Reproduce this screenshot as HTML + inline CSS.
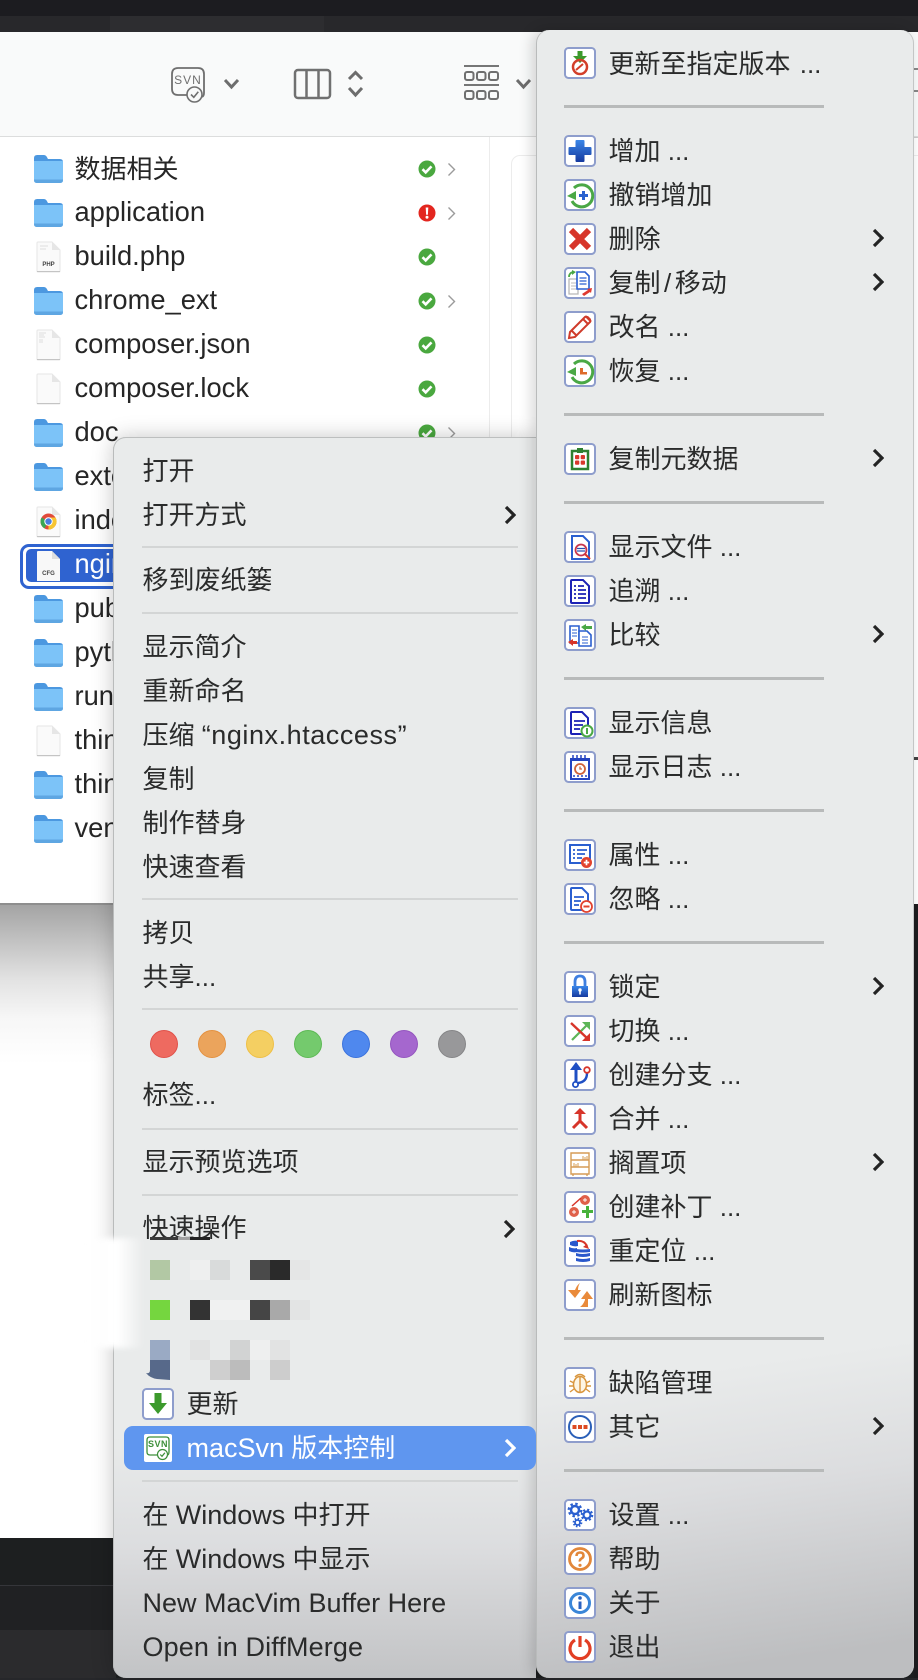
<!DOCTYPE html>
<html lang="zh"><head><meta charset="utf-8"><title>macSvn</title>
<style>
html,body{margin:0;padding:0;background:#1d1f20}
#p{position:relative;width:918px;height:1680px;overflow:hidden;font-family:"Liberation Sans","Noto Sans CJK SC",sans-serif;font-size:26px;color:#2a2b2b;background:#1d1f20}
#p div,#p svg{position:absolute}
.e{font-size:27px}
.t{line-height:44px;height:44px;white-space:nowrap}
.f{left:74.500px;color:#262626;font-size:27.300px}
.l{left:142.500px;z-index:3}
.h{left:186.500px;z-index:3}
.r{left:608.500px;z-index:6}
.i{left:564px;width:32px;height:32px;z-index:6}
.ls{left:142px;width:376px;height:2px;background:#d3d5d5;z-index:3}
.rs{left:564px;width:260px;height:3px;background:#b8baba;z-index:6}
.cr{left:872px;width:12px;height:20px;z-index:6}
.fo{left:33.500px;width:29px;height:28px}
.fi{left:36px;width:25px;height:32px}
.st{left:418px;width:18px;height:18px}
.di{left:447px;width:9px;height:15px}
.dot{width:26px;height:26px;border-radius:50%;top:1030px;z-index:3;border:1px solid}
.m{position:absolute;z-index:4;height:20px;width:20px}
</style></head><body><div id="p">
<svg width="0" height="0" style="position:absolute"><defs>
<symbol id="fold" viewBox="0 0 27 28" preserveAspectRatio="none"><path d="M0 3q0-3 3-3h6q2 0 3 2l1 2h11q3 0 3 3v6H0z" fill="#4c98e0"/><path d="M0 6h27v19q0 3-3 3H3q-3 0-3-3z" fill="#7cc3f8"/><path d="M0 24.500h27v.5q0 3-3 3H3q-3 0-3-3z" fill="#5ea6e2"/></symbol>
<symbol id="doc" viewBox="0 0 25 32"><path d="M2 1h14l8 8v21q0 1-1 1H2q-1 0-1-1V2q0-1 1-1z" fill="#fafafa" stroke="#e6e6e6"/><path d="M16 1v8h8z" fill="#e6e6e6"/><path d="M1 30h23v1H1z" fill="#c4c4c4"/></symbol>
<symbol id="ok" viewBox="0 0 18 18"><circle cx="9" cy="9" r="8.500" fill="#4aa83f"/><path d="M4.500 9.200l3.200 3.200 5.800-6" fill="none" stroke="#fff" stroke-width="2.600"/></symbol>
<symbol id="chev" viewBox="0 0 9 15"><path d="M1.500 1.500l6 6-6 6" fill="none" stroke="#9b9b9b" stroke-width="1.400"/></symbol>
<symbol id="sub" viewBox="0 0 12 20"><path d="M2 2l8 8-8 8" fill="none" stroke="#232323" stroke-width="3.200"/></symbol>
<symbol id="bx" viewBox="0 0 32 32"><rect x="1" y="1" width="30" height="30" rx="3.500" fill="#fff" stroke="#8e9dcc" stroke-width="2"/></symbol>
</defs></svg>

<!-- top bar -->
<div style="left:0;top:0;width:918px;height:16px;background:#1c1c20"></div>
<div style="left:0;top:16px;width:918px;height:16px;background:#28282b"></div>
<div style="left:110px;top:16px;width:214px;height:16px;background:#2d2d30"></div>

<!-- window -->
<div style="left:0;top:32px;width:918px;height:872px;background:#fff"></div>
<div style="left:0;top:32px;width:918px;height:104px;background:#f9fafa"></div>
<div style="left:0;top:136px;width:918px;height:1px;background:#dcdddd"></div>
<div style="left:489px;top:137px;width:1px;height:767px;background:#ececec"></div>
<div style="left:511px;top:155px;width:430px;height:749px;border:1px solid #ececec;border-radius:9px"></div>
<div style="left:914px;top:90px;width:4px;height:2px;background:#888"></div>
<div style="left:914px;top:68px;width:4px;height:2px;background:#888"></div>
<div style="left:914px;top:757px;width:4px;height:3px;background:#444"></div>
<div style="left:914px;top:137px;width:4px;height:1px;background:#ccc"></div>

<!-- toolbar icons -->
<svg style="left:170px;top:67px" width="36" height="37" viewBox="0 0 36 37"><path d="M8 1h20q6 0 6 6v19q0 3-2 4M24 28H8q-6 0-6-6V7q0-6 6-6" fill="none" stroke="#6f6f6f" stroke-width="1.800"/><text x="18" y="17" text-anchor="middle" font-size="12" font-family="Liberation Sans" fill="#6f6f6f" letter-spacing="1">SVN</text><circle cx="24.500" cy="27.500" r="7.500" fill="#f9fafa" stroke="#6f6f6f" stroke-width="1.600"/><path d="M21 27.500l2.800 2.800 4.500-5.500" fill="none" stroke="#6f6f6f" stroke-width="1.600"/></svg>
<svg style="left:223px;top:78px" width="17" height="12" viewBox="0 0 17 12"><path d="M2 2l6.500 7L15 2" fill="none" stroke="#6d6d6d" stroke-width="3"/></svg>
<svg style="left:293px;top:68px" width="39" height="32" viewBox="0 0 39 32"><rect x="2" y="2" width="35" height="28" rx="3" fill="none" stroke="#707070" stroke-width="2.500"/><path d="M13.500 2v28M25.500 2v28" stroke="#707070" stroke-width="2.500"/></svg>
<svg style="left:347px;top:70px" width="17" height="28" viewBox="0 0 17 28"><path d="M2 9l6.500-6.500L15 9M2 18l6.500 7 6.500-7" fill="none" stroke="#6d6d6d" stroke-width="3"/></svg>
<svg style="left:464px;top:65px" width="36" height="36" viewBox="0 0 36 36"><path d="M0 1h35M0 20h35" stroke="#767676" stroke-width="2"/><g fill="none" stroke="#6f6f6f" stroke-width="2"><rect x="1" y="7" width="8.500" height="8" rx="2"/><rect x="13" y="7" width="8.500" height="8" rx="2"/><rect x="25" y="7" width="9" height="8" rx="2"/><rect x="1" y="26" width="8.500" height="8" rx="2"/><rect x="13" y="26" width="8.500" height="8" rx="2"/><rect x="25" y="26" width="9" height="8" rx="2"/></g></svg>
<svg style="left:515px;top:78px" width="17" height="12" viewBox="0 0 17 12"><path d="M2 2l6.500 7L15 2" fill="none" stroke="#6d6d6d" stroke-width="3"/></svg>

<!-- file list -->
<svg class="fo" style="top:155px"><use href="#fold"/></svg>
<svg class="fo" style="top:199px"><use href="#fold"/></svg>
<svg class="fi" style="top:241px"><use href="#doc"/></svg>
<svg style="left:36px;top:241px" width="25" height="32"><text x="12.500" y="25" text-anchor="middle" font-size="6" font-family="Liberation Sans" font-weight="700" fill="#444">PHP</text><path d="M4 5h8M4 8h6" stroke="#ddd"/></svg>
<svg class="fo" style="top:287px"><use href="#fold"/></svg>
<svg class="fi" style="top:329px"><use href="#doc"/></svg>
<svg style="left:36px;top:329px" width="25" height="32"><path d="M3 4h7M3 6h5M3 8h6M3 11h4M3 13h4" stroke="#ddd"/></svg>
<svg class="fi" style="top:373px"><use href="#doc"/></svg>
<svg class="fo" style="top:419px"><use href="#fold"/></svg>
<svg class="fo" style="top:463px"><use href="#fold"/></svg>
<svg class="fi" style="top:506px"><use href="#doc"/></svg>
<svg style="left:40px;top:513px" width="17" height="17" viewBox="0 0 17 17"><circle cx="8.500" cy="8.500" r="8" fill="#e14a3b"/><path d="M8.500 8.500V16.500A8 8 0 0 0 15.500 4.500H8.500z" fill="#f7c531"/><path d="M8.500 8.500L4.500 15.400A8 8 0 0 1 1.600 4.500z" fill="#3aa655"/><circle cx="8.500" cy="8.500" r="4.200" fill="#fff"/><circle cx="8.500" cy="8.500" r="3.200" fill="#4a7de0"/></svg>
<div style="left:20px;top:544px;width:130px;height:39px;border:3px solid #2f63d0;border-radius:9px;background:#fff"></div>
<div style="left:26px;top:549px;width:130px;height:33px;background:#2f63d0;border-radius:5px"></div>
<svg style="left:36px;top:550px" width="25" height="32" viewBox="0 0 25 32"><path d="M2 1h14l8 8v22H1V2q0-1 1-1z" fill="#f8f8f8"/><path d="M16 1v8h8z" fill="#dedede"/><text x="12.500" y="25" text-anchor="middle" font-size="6" font-family="Liberation Sans" font-weight="700" fill="#444">CFG</text></svg>
<svg class="fo" style="top:595px"><use href="#fold"/></svg>
<svg class="fo" style="top:639px"><use href="#fold"/></svg>
<svg class="fo" style="top:683px"><use href="#fold"/></svg>
<svg class="fi" style="top:725px"><use href="#doc"/></svg>
<svg class="fo" style="top:771px"><use href="#fold"/></svg>
<svg class="fo" style="top:815px"><use href="#fold"/></svg>

<div class="t f" style="top:147px;font-size:26px">数据相关</div>
<div class="t f" style="top:190px">application</div>
<div class="t f" style="top:234px">build.php</div>
<div class="t f" style="top:278px">chrome_ext</div>
<div class="t f" style="top:322px">composer.json</div>
<div class="t f" style="top:366px">composer.lock</div>
<div class="t f" style="top:410px">doc</div>
<div class="t f" style="top:454px">extend</div>
<div class="t f" style="top:498px">index.html</div>
<div class="t f" style="top:542px;color:#fff;z-index:1">nginx</div>
<div class="t f" style="top:586px">public</div>
<div class="t f" style="top:630px">python</div>
<div class="t f" style="top:674px">runtime</div>
<div class="t f" style="top:718px">think</div>
<div class="t f" style="top:762px">thinkphp</div>
<div class="t f" style="top:806px">vendor</div>

<svg class="st" style="top:160px"><use href="#ok"/></svg>
<svg class="st" style="top:248px"><use href="#ok"/></svg>
<svg class="st" style="top:292px"><use href="#ok"/></svg>
<svg class="st" style="top:336px"><use href="#ok"/></svg>
<svg class="st" style="top:380px"><use href="#ok"/></svg>
<svg class="st" style="top:424px"><use href="#ok"/></svg>
<svg class="st" style="top:204px" viewBox="0 0 18 18"><circle cx="9" cy="9" r="8.500" fill="#e3261f"/><path d="M7.700 3.500h2.600l-.4 7.200H8.100z" fill="#fff"/><circle cx="9" cy="13.300" r="1.500" fill="#fff"/></svg>
<svg class="di" style="top:162px"><use href="#chev"/></svg>
<svg class="di" style="top:206px"><use href="#chev"/></svg>
<svg class="di" style="top:294px"><use href="#chev"/></svg>
<svg class="di" style="top:426px"><use href="#chev"/></svg>

<!-- below window -->
<div style="left:0;top:904px;width:116px;height:634px;background:linear-gradient(#a3a3a3 0,#bcbcbc 30px,#e2e2e2 75px,#f7f7f7 115px,#fff 160px)"></div>
<div style="left:0;top:903px;width:116px;height:2px;background:#8e8e8e"></div>
<div style="left:0;top:1538px;width:116px;height:47px;background:#1d1f20"></div>
<div style="left:0;top:1585px;width:116px;height:1px;background:#35363a"></div>
<div style="left:0;top:1586px;width:116px;height:44px;background:#202123"></div>
<div style="left:0;top:1630px;width:116px;height:50px;background:#2b2b2d"></div>

<!-- left menu -->
<div style="left:113px;top:437px;width:423px;height:1241px;border-radius:13px 0 0 13px;background:linear-gradient(#e9ebeb 0,#e9ebeb 1000px,#dcdddf 1110px,#c2c3c5 1241px);box-shadow:0 0 22px rgba(0,0,0,.22),inset 1px 0 0 #b9bbbb,inset 0 1px 0 #bdbfbf;z-index:2"></div>

<div class="t l" style="top:449px">打开</div>
<div class="t l" style="top:493px">打开方式</div>
<svg class="cr" style="left:504px;top:505px;z-index:3"><use href="#sub"/></svg>
<div class="ls" style="top:546px"></div>
<div class="t l" style="top:558px">移到废纸篓</div>
<div class="ls" style="top:612px"></div>
<div class="t l" style="top:625px">显示简介</div>
<div class="t l" style="top:669px">重新命名</div>
<div class="t l" style="top:713px">压缩 <span class="e" style="letter-spacing:.55px">“nginx.htaccess”</span></div>
<div class="t l" style="top:757px">复制</div>
<div class="t l" style="top:801px">制作替身</div>
<div class="t l" style="top:845px">快速查看</div>
<div class="ls" style="top:898px"></div>
<div class="t l" style="top:911px">拷贝</div>
<div class="t l" style="top:955px">共享...</div>
<div class="ls" style="top:1008px"></div>
<div class="dot" style="left:150px;background:#ee6a60;border-color:#e0514a"></div>
<div class="dot" style="left:198px;background:#eba45c;border-color:#e49140"></div>
<div class="dot" style="left:246px;background:#f4cf62;border-color:#eebf45"></div>
<div class="dot" style="left:294px;background:#74ca6d;border-color:#5db955"></div>
<div class="dot" style="left:342px;background:#4f88ee;border-color:#3a72dc"></div>
<div class="dot" style="left:390px;background:#a567ce;border-color:#9455bf"></div>
<div class="dot" style="left:438px;background:#98989a;border-color:#858587"></div>
<div class="t l" style="top:1073px">标签...</div>
<div class="ls" style="top:1128px"></div>
<div class="t l" style="top:1140px">显示预览选项</div>
<div class="ls" style="top:1194px"></div>
<div class="t l" style="top:1206px">快速操作</div>
<svg class="cr" style="left:503px;top:1219px;z-index:3"><use href="#sub"/></svg>

<!-- mosaic area -->
<div style="left:115px;top:1239px;width:400px;height:148px;background:#e9ebeb;z-index:3"></div>
<div style="left:84px;top:1238px;width:60px;height:110px;background:linear-gradient(90deg,rgba(255,255,255,0),rgba(255,255,255,.95) 35%,#fff 55%,rgba(255,255,255,0));filter:blur(3px);z-index:4"></div>
<div style="left:150px;top:1237px;width:28px;height:3px;background:#3a3a3a;z-index:4"></div>
<div style="left:178px;top:1237px;width:12px;height:3px;background:#a0a0a0;z-index:4"></div>
<div style="left:190px;top:1237px;width:20px;height:3px;background:#222;z-index:4"></div>

<div class="m" style="left:150px;top:1260px;background:#b2c8a4"></div>
<div class="m" style="left:190px;top:1260px;background:#eeefef"></div>
<div class="m" style="left:210px;top:1260px;background:#d9dbdb"></div>
<div class="m" style="left:250px;top:1260px;background:#4a4a4a"></div>
<div class="m" style="left:270px;top:1260px;background:#2a2a2a"></div>
<div class="m" style="left:290px;top:1260px;background:#e5e6e6"></div>

<div class="m" style="left:150px;top:1300px;background:#75d63f"></div>
<div class="m" style="left:190px;top:1300px;background:#333"></div>
<div class="m" style="left:210px;top:1300px;width:40px;background:#f0f1f1"></div>
<div class="m" style="left:250px;top:1300px;background:#454545"></div>
<div class="m" style="left:270px;top:1300px;background:#a9a9a9"></div>
<div class="m" style="left:290px;top:1300px;background:#e3e4e4"></div>

<div class="m" style="left:150px;top:1340px;background:#9aaac4"></div>
<svg class="m" style="left:145px;top:1360px;width:25px;height:22px"><path d="M5 0H25V20L12 19Q5 18 1 13Q5 14 5 10z" fill="#57698a"/></svg>
<div class="m" style="left:190px;top:1340px;background:#e2e3e3"></div>
<div class="m" style="left:230px;top:1340px;background:#d2d3d3"></div>
<div class="m" style="left:250px;top:1340px;background:#eeefef"></div>
<div class="m" style="left:270px;top:1340px;background:#e2e3e3"></div>
<div class="m" style="left:210px;top:1360px;background:#cfcfcf"></div>
<div class="m" style="left:230px;top:1360px;background:#bcbcbc"></div>
<div class="m" style="left:270px;top:1360px;background:#cdcdcd"></div>

<svg style="left:142px;top:1388px;z-index:4" width="32" height="32" viewBox="0 0 32 32"><use href="#bx"/><path d="M12.500 5h7v10H25l-9 11-9-11h5.500z" fill="#3c9a2c"/></svg>
<div class="t h" style="top:1382px">更新</div>

<div style="left:124px;top:1426px;width:412px;height:44px;background:#5f96ef;border-radius:9px;z-index:6"></div>
<svg style="left:143.500px;top:1434px;z-index:7" width="28" height="28" viewBox="0 0 28 28"><rect width="28" height="28" rx="2" fill="#fff"/><path d="M6 3h16q3 0 3 3v12q0 2-1 3M17 21H6q-3 0-3-3V6q0-3 3-3" fill="none" stroke="#3d8f3a" stroke-width="1.300"/><text x="14" y="13" text-anchor="middle" font-size="9" font-weight="700" font-family="Liberation Sans" fill="#3d8f3a" letter-spacing=".5">SVN</text><circle cx="18.500" cy="20.500" r="5" fill="#fff" stroke="#3d8f3a" stroke-width="1.200"/><path d="M16.200 20.500l1.800 1.800 2.900-3.600" fill="none" stroke="#3d8f3a" stroke-width="1.200"/></svg>
<div class="t h" style="top:1426px;color:#fff;z-index:7"><span class="e">macSvn</span> 版本控制</div>
<svg class="cr" style="left:504px;top:1438px;z-index:7" viewBox="0 0 12 20"><path d="M2 2l8 8-8 8" fill="none" stroke="#fff" stroke-width="3.200"/></svg>
<div class="ls" style="top:1480px"></div>
<div class="t l" style="top:1493px">在 <span class="e">Windows</span> 中打开</div>
<div class="t l" style="top:1537px">在 <span class="e">Windows</span> 中显示</div>
<div class="t l" style="top:1581px"><span class="e">New MacVim Buffer Here</span></div>
<div class="t l" style="top:1625px"><span class="e" style="letter-spacing:.12px">Open in DiffMerge</span></div>

<!-- right column below window -->
<div style="left:914px;top:904px;width:4px;height:776px;background:#1c1c1e"></div>
<div style="left:0;top:1678px;width:918px;height:2px;background:#26272a;z-index:1"></div>

<!-- right menu -->
<div style="left:536px;top:30px;width:378px;height:1648px;border-radius:13px;background:linear-gradient(172deg,#e9ebeb 0,#e9ebeb 1350px,#dcdddf 1470px,#bdbec0 1648px);box-shadow:-4px 0 14px rgba(0,0,0,.16),inset 1px 0 0 #b9bbbb,inset -1px 0 0 #c4c6c6;z-index:5"></div>

<svg class="i" style="top:47px" viewBox="0 0 32 32"><use href="#bx"/><path d="M13.500 4h5v5H23l-7 7-7-7h4.500z" fill="#3c9a2c"/><circle cx="16" cy="20" r="7" fill="none" stroke="#d33f2a" stroke-width="2.500"/><path d="M12 23l7-6" stroke="#d33f2a" stroke-width="2"/></svg>
<div class="t r" style="top:41.500px">更新至指定版本 <span style="margin-left:2px">...</span></div>
<div class="rs" style="top:105px"></div>

<svg class="i" style="top:135px" viewBox="0 0 32 32"><defs><linearGradient id="bl" x1="0" y1="0" x2="0" y2="1"><stop offset="0" stop-color="#3a86e8"/><stop offset="1" stop-color="#163a9f"/></linearGradient></defs><use href="#bx"/><path d="M12.500 5h7q1 0 1 1v6h6q1 0 1 1v6q0 1-1 1h-6v6q0 1-1 1h-7q-1 0-1-1v-6h-6q-1 0-1-1v-6q0-1 1-1h6V6q0-1 1-1z" fill="url(#bl)"/></svg>
<div class="t r" style="top:129px">增加 ...</div>

<svg class="i" style="top:179px" viewBox="0 0 32 32"><use href="#bx"/><path d="M10 9a11 11 0 1 1-2 13" fill="none" stroke="#4aa845" stroke-width="3"/><path d="M3 17l9-5v9z" fill="#4aa845"/><path d="M15 15h3v-3h3v3h3v3h-3v3h-3v-3h-3z" fill="#2a62cf"/></svg>
<div class="t r" style="top:173px">撤销增加</div>

<svg class="i" style="top:223px" viewBox="0 0 32 32"><use href="#bx"/><path d="M7 7l18 18M25 7L7 25" stroke="#d7352a" stroke-width="6"/></svg>
<div class="t r" style="top:217px">删除</div>
<svg class="cr" style="top:228px"><use href="#sub"/></svg>

<svg class="i" style="top:267px" viewBox="0 0 32 32"><use href="#bx"/><path d="M5 12h9v15H5z" fill="#fff" stroke="#b8b8b8" stroke-width="1.300"/><path d="M7 16h5M7 19h5M7 22h5" stroke="#bbb"/><path d="M13 5h8l4 4v13H13z" fill="#fff" stroke="#2a5fd0" stroke-width="1.600"/><path d="M15.500 11h7M15.500 14h7M15.500 17h7" stroke="#2a5fd0" stroke-width="1.200"/><path d="M5 10q0-4 4-5" fill="none" stroke="#4aa845" stroke-width="1.800"/><path d="M8 3l4 2-4 3z" fill="#4aa845"/><path d="M18 27l6-4-1-1 5-1-1 5-1-1-6 4z" fill="#e03a30"/></svg>
<div class="t r" style="top:261px">复制<span style="margin:0 3.500px">/</span>移动</div>
<svg class="cr" style="top:272px"><use href="#sub"/></svg>

<svg class="i" style="top:311px" viewBox="0 0 32 32"><use href="#bx"/><path d="M6 21L21 6q1-1 2 0l3 3q1 1 0 2L11 26l-6 1z" fill="#fff" stroke="#cf3b2b" stroke-width="2"/><path d="M19 8l5 5M8 20l4 4" stroke="#cf3b2b" stroke-width="2"/><path d="M21 6l5 5 1-3-3-3z" fill="#cf3b2b"/></svg>
<div class="t r" style="top:305px">改名 ...</div>

<svg class="i" style="top:355px" viewBox="0 0 32 32"><use href="#bx"/><path d="M10 9a11 11 0 1 1-2 13" fill="none" stroke="#4aa845" stroke-width="3"/><path d="M3 17l9-5v9z" fill="#4aa845"/><path d="M16 13h3v4h4v2.500h-7z" fill="#dd6b2b"/></svg>
<div class="t r" style="top:349px">恢复 ...</div>
<div class="rs" style="top:413px"></div>

<svg class="i" style="top:443px" viewBox="0 0 32 32"><use href="#bx"/><path d="M8 8h16v18H8z" fill="#fff" stroke="#2d8030" stroke-width="2.500"/><path d="M13 5h6v5h-6z" fill="#2d8030"/><g fill="#d8382c"><rect x="11" y="12" width="4.300" height="4.300" rx="1"/><rect x="16.700" y="12" width="4.300" height="4.300" rx="1"/><rect x="11" y="17.500" width="4.300" height="4.300" rx="1"/><rect x="16.700" y="17.500" width="4.300" height="4.300" rx="1"/></g></svg>
<div class="t r" style="top:437px">复制元数据</div>
<svg class="cr" style="top:448px"><use href="#sub"/></svg>
<div class="rs" style="top:501px"></div>

<svg class="i" style="top:531px" viewBox="0 0 32 32"><use href="#bx"/><path d="M8 5h11l6 6v17H8z" fill="#fff" stroke="#2a5fd0" stroke-width="2"/><circle cx="17" cy="19" r="5.500" fill="#fff" stroke="#c7354d" stroke-width="1.800"/><path d="M13 17.500h8M13 20h8" stroke="#2a4fb0" stroke-width="1.300"/><path d="M21 23l5 5" stroke="#d7352a" stroke-width="2"/></svg>
<div class="t r" style="top:525px">显示文件 ...</div>

<svg class="i" style="top:575px" viewBox="0 0 32 32"><use href="#bx"/><path d="M8 5h11l6 6v16q0 1-1 1H8q-1 0-1-1V6q0-1 1-1z" fill="#fff" stroke="#1c22b5" stroke-width="2"/><path d="M10 11h2M14 11h6M10 15h2M14 15h8M10 19h2M14 19h8M10 23h2M14 23h8" stroke="#1c22b5" stroke-width="1.700"/></svg>
<div class="t r" style="top:569px">追溯 ...</div>

<svg class="i" style="top:619px" viewBox="0 0 32 32"><use href="#bx"/><path d="M6 7h9v17H6z" fill="#fff" stroke="#2a5fd0" stroke-width="1.600"/><path d="M8 11h5M8 14h5M8 17h5" stroke="#2a5fd0" stroke-width="1.100"/><path d="M15 12h8l4 4v11H15z" fill="#fff" stroke="#2a5fd0" stroke-width="1.600"/><path d="M18 18h6M18 21h6M18 24h6" stroke="#2a5fd0" stroke-width="1.100"/><path d="M17 8l5-3v2h6v3h-6v2z" fill="#4aa845"/><path d="M13 23l-5-3v2H4v3h4v2z" fill="#d7352a" transform="matrix(-1 0 0 1 17 0)"/></svg>
<div class="t r" style="top:613px">比较</div>
<svg class="cr" style="top:624px"><use href="#sub"/></svg>
<div class="rs" style="top:677px"></div>

<svg class="i" style="top:707px" viewBox="0 0 32 32"><use href="#bx"/><path d="M8 5h10l6 6v16H8q-1 0-1-1V6q0-1 1-1z" fill="#fff" stroke="#1c22b5" stroke-width="2"/><path d="M10 14h11M10 18h9M10 22h6" stroke="#1c22b5" stroke-width="1.800"/><circle cx="23" cy="24" r="5.500" fill="#fff" stroke="#4aa845" stroke-width="2"/><path d="M23 21v6" stroke="#4aa845" stroke-width="2"/></svg>
<div class="t r" style="top:701px">显示信息</div>

<svg class="i" style="top:751px" viewBox="0 0 32 32"><use href="#bx"/><path d="M7 8h18v20H7z" fill="#fff" stroke="#2444c0" stroke-width="2"/><path d="M7 7h18v3H7z" fill="#2444c0"/><path d="M9 4v5M13 4v5M17 4v5M21 4v5" stroke="#2444c0" stroke-width="1.500"/><circle cx="16" cy="18" r="5" fill="#fff" stroke="#d0633a" stroke-width="1.800"/><path d="M16 15.500V18h2" stroke="#d0633a" stroke-width="1.300" fill="none"/><path d="M9 25h2M13 25h2M17 25h2M21 25h2" stroke="#2444c0" stroke-width="1.500"/></svg>
<div class="t r" style="top:745px">显示日志 ...</div>
<div class="rs" style="top:809px"></div>

<svg class="i" style="top:839px" viewBox="0 0 32 32"><use href="#bx"/><rect x="6" y="6" width="20" height="18" fill="#fff" stroke="#2a5fd0" stroke-width="2"/><path d="M9 11h2M13 11h10M9 15h2M13 15h8M9 19h2M13 19h5" stroke="#2a5fd0" stroke-width="1.700"/><circle cx="22.500" cy="23.500" r="5.500" fill="#e2432f"/><path d="M19.800 23.500h5.400M22.500 20.800v5.400" stroke="#fff" stroke-width="1.700"/></svg>
<div class="t r" style="top:833px">属性 ...</div>

<svg class="i" style="top:883px" viewBox="0 0 32 32"><use href="#bx"/><path d="M8 5h10l6 6v16H8q-1 0-1-1V6q0-1 1-1z" fill="#fff" stroke="#2a5fd0" stroke-width="2"/><path d="M10 14h10M10 18h7M10 22h5" stroke="#2a5fd0" stroke-width="1.800"/><circle cx="22.500" cy="23.500" r="5.500" fill="#fff" stroke="#e2432f" stroke-width="1.800"/><path d="M19.500 23.500h6" stroke="#e2432f" stroke-width="2"/></svg>
<div class="t r" style="top:877px">忽略 ...</div>
<div class="rs" style="top:941px"></div>

<svg class="i" style="top:971px" viewBox="0 0 32 32"><use href="#bx"/><path d="M11 15v-4q0-6 5-6t5 6v4" fill="none" stroke="#3f7fe0" stroke-width="2.800"/><path d="M8 15h16v11H8z" fill="url(#bl)"/><circle cx="16" cy="19" r="1.700" fill="#fff"/><path d="M15.200 19h1.600v4.500h-1.600z" fill="#fff"/></svg>
<div class="t r" style="top:965px">锁定</div>
<svg class="cr" style="top:976px"><use href="#sub"/></svg>

<svg class="i" style="top:1015px" viewBox="0 0 32 32"><use href="#bx"/><path d="M8 25L24 9" stroke="#5cb557" stroke-width="2.200"/><path d="M18 7h8v8z" fill="#5cb557"/><path d="M7 8l17 16" stroke="#d7352a" stroke-width="2.400"/><path d="M26 18v8h-8z" fill="#d7352a"/></svg>
<div class="t r" style="top:1009px">切换 ...</div>

<svg class="i" style="top:1059px" viewBox="0 0 32 32"><use href="#bx"/><path d="M12 10v13" stroke="#1f4fc4" stroke-width="3"/><path d="M12 3l6 8H6z" fill="#1f4fc4"/><path d="M14 24q9-1 9-10" fill="none" stroke="#1f4fc4" stroke-width="2.400"/><circle cx="11.500" cy="25.500" r="2.600" fill="#fff" stroke="#1f4fc4" stroke-width="1.800"/><circle cx="23" cy="11" r="2.800" fill="#fff" stroke="#d7352a" stroke-width="1.800"/></svg>
<div class="t r" style="top:1053px">创建分支 ...</div>

<svg class="i" style="top:1103px" viewBox="0 0 32 32"><use href="#bx"/><path d="M16 8v10M16 18l-7 7M16 18l7 7" fill="none" stroke="#d7352a" stroke-width="3"/><path d="M16 5l6 6H10z" fill="#d7352a"/></svg>
<div class="t r" style="top:1097px">合并 ...</div>

<svg class="i" style="top:1147px" viewBox="0 0 32 32"><use href="#bx"/><path d="M7 6h18v21H7zM7 13h18M7 20h18M9 27v2M23 27v2" fill="none" stroke="#d59c56" stroke-width="1.400"/><path d="M19 9v4M21 10v3M23 9v4M10 16v4M12 17v3M14 16v4" stroke="#d59c56"/></svg>
<div class="t r" style="top:1141px">搁置项</div>
<svg class="cr" style="top:1152px"><use href="#sub"/></svg>

<svg class="i" style="top:1191px" viewBox="0 0 32 32"><use href="#bx"/><circle cx="10" cy="21" r="5" fill="#e0604a"/><circle cx="21" cy="9" r="5" fill="#e0604a"/><path d="M8 15L17 7" stroke="#d7352a" stroke-width="1.500"/><path d="M8 21h4M10 19v4M19 9h4M21 7v4" stroke="#fff" stroke-width=".9"/><path d="M18 19h4v-4h3v4h4v3h-4v5h-3v-5h-4z" fill="#47b23b"/></svg>
<div class="t r" style="top:1185px">创建补丁 ...</div>

<svg class="i" style="top:1235px" viewBox="0 0 32 32"><use href="#bx"/><g fill="#2a58cc"><path d="M6 7q4-2 8-1v5q-4 1-8-1z"/><path d="M5 12q4 2 8 1v4q-4 1-8-1z"/><path d="M12 18q6 2 14 0v3q-7 2-14 0z"/><path d="M12 23q7 2 14 0v3q-7 2-14 0z"/><path d="M12 14q7 1 14 0v3q-7 1-14 0z"/></g><path d="M13 6q7-1 10 5" fill="none" stroke="#d7352a" stroke-width="2"/><path d="M25 14l-6-2 4-3z" fill="#d7352a"/></svg>
<div class="t r" style="top:1229px">重定位 ...</div>

<svg class="i" style="top:1279px" viewBox="0 0 32 32"><use href="#bx"/><path d="M16 4q-3 2-5 7H4l7 8 6-8h-3q0-4 2-7z" fill="#e98a3a"/><path d="M16 28q3-2 5-7v-1h-4l6-8 6 8h-5v8q-4 0-8 0z" fill="#e98a3a"/></svg>
<div class="t r" style="top:1273px">刷新图标</div>
<div class="rs" style="top:1337px"></div>

<svg class="i" style="top:1367px" viewBox="0 0 32 32"><use href="#bx"/><ellipse cx="16" cy="17.500" rx="6.500" ry="8" fill="#fdf5e4" stroke="#d9963e" stroke-width="1.500"/><path d="M11 10q5-5 10 0M16 10v16M6 14l4 2M26 14l-4 2M5 19h5M27 19h-5M6 25l4-3M26 25l-4-3" fill="none" stroke="#d9963e" stroke-width="1.400"/></svg>
<div class="t r" style="top:1361px">缺陷管理</div>

<svg class="i" style="top:1411px" viewBox="0 0 32 32"><use href="#bx"/><circle cx="16" cy="16" r="11" fill="#fff" stroke="#2a5fb8" stroke-width="2"/><rect x="8.500" y="14" width="4" height="4" fill="#dd4a22"/><rect x="14" y="14" width="4" height="4" fill="#dd4a22"/><rect x="19.500" y="14" width="4" height="4" fill="#dd4a22"/></svg>
<div class="t r" style="top:1405px">其它</div>
<svg class="cr" style="top:1416px"><use href="#sub"/></svg>
<div class="rs" style="top:1469px"></div>

<svg class="i" style="top:1499px" viewBox="0 0 32 32"><use href="#bx"/><g fill="none" stroke="#2a5fd0"><circle cx="11" cy="11" r="4" stroke-width="2.500"/><circle cx="11" cy="11" r="6.300" stroke-width="2.200" stroke-dasharray="2.500 2.450"/><circle cx="23" cy="16" r="3.500" stroke-width="2.200"/><circle cx="23" cy="16" r="5.300" stroke-width="2" stroke-dasharray="2.100 2.060"/><circle cx="13.500" cy="23.500" r="2.500" stroke-width="1.800"/><circle cx="13.500" cy="23.500" r="4" stroke-width="1.700" stroke-dasharray="1.600 1.540"/></g></svg>
<div class="t r" style="top:1493px">设置 ...</div>

<svg class="i" style="top:1543px" viewBox="0 0 32 32"><use href="#bx"/><circle cx="16" cy="16" r="10.500" fill="#fff" stroke="#e2873a" stroke-width="2.800"/><path d="M12.500 13q0-3.500 3.500-3.500t3.500 3q0 2-2 3t-1.500 3" fill="none" stroke="#e2873a" stroke-width="2.600"/><circle cx="16" cy="22.300" r="1.600" fill="#e2873a"/></svg>
<div class="t r" style="top:1537px">帮助</div>

<svg class="i" style="top:1587px" viewBox="0 0 32 32"><use href="#bx"/><circle cx="16" cy="16" r="9.500" fill="#fff" stroke="#3a86d8" stroke-width="3"/><circle cx="16" cy="11" r="1.800" fill="#2a62c0"/><path d="M14.500 14.500h3V22h-3z" fill="#2a62c0"/></svg>
<div class="t r" style="top:1581px">关于</div>

<svg class="i" style="top:1631px" viewBox="0 0 32 32"><use href="#bx"/><path d="M11 9a10 10 0 1 0 10 0" fill="none" stroke="#e23e24" stroke-width="3.200"/><path d="M16 5v11" stroke="#e23e24" stroke-width="3.200"/></svg>
<div class="t r" style="top:1625px">退出</div>

</div></body></html>
